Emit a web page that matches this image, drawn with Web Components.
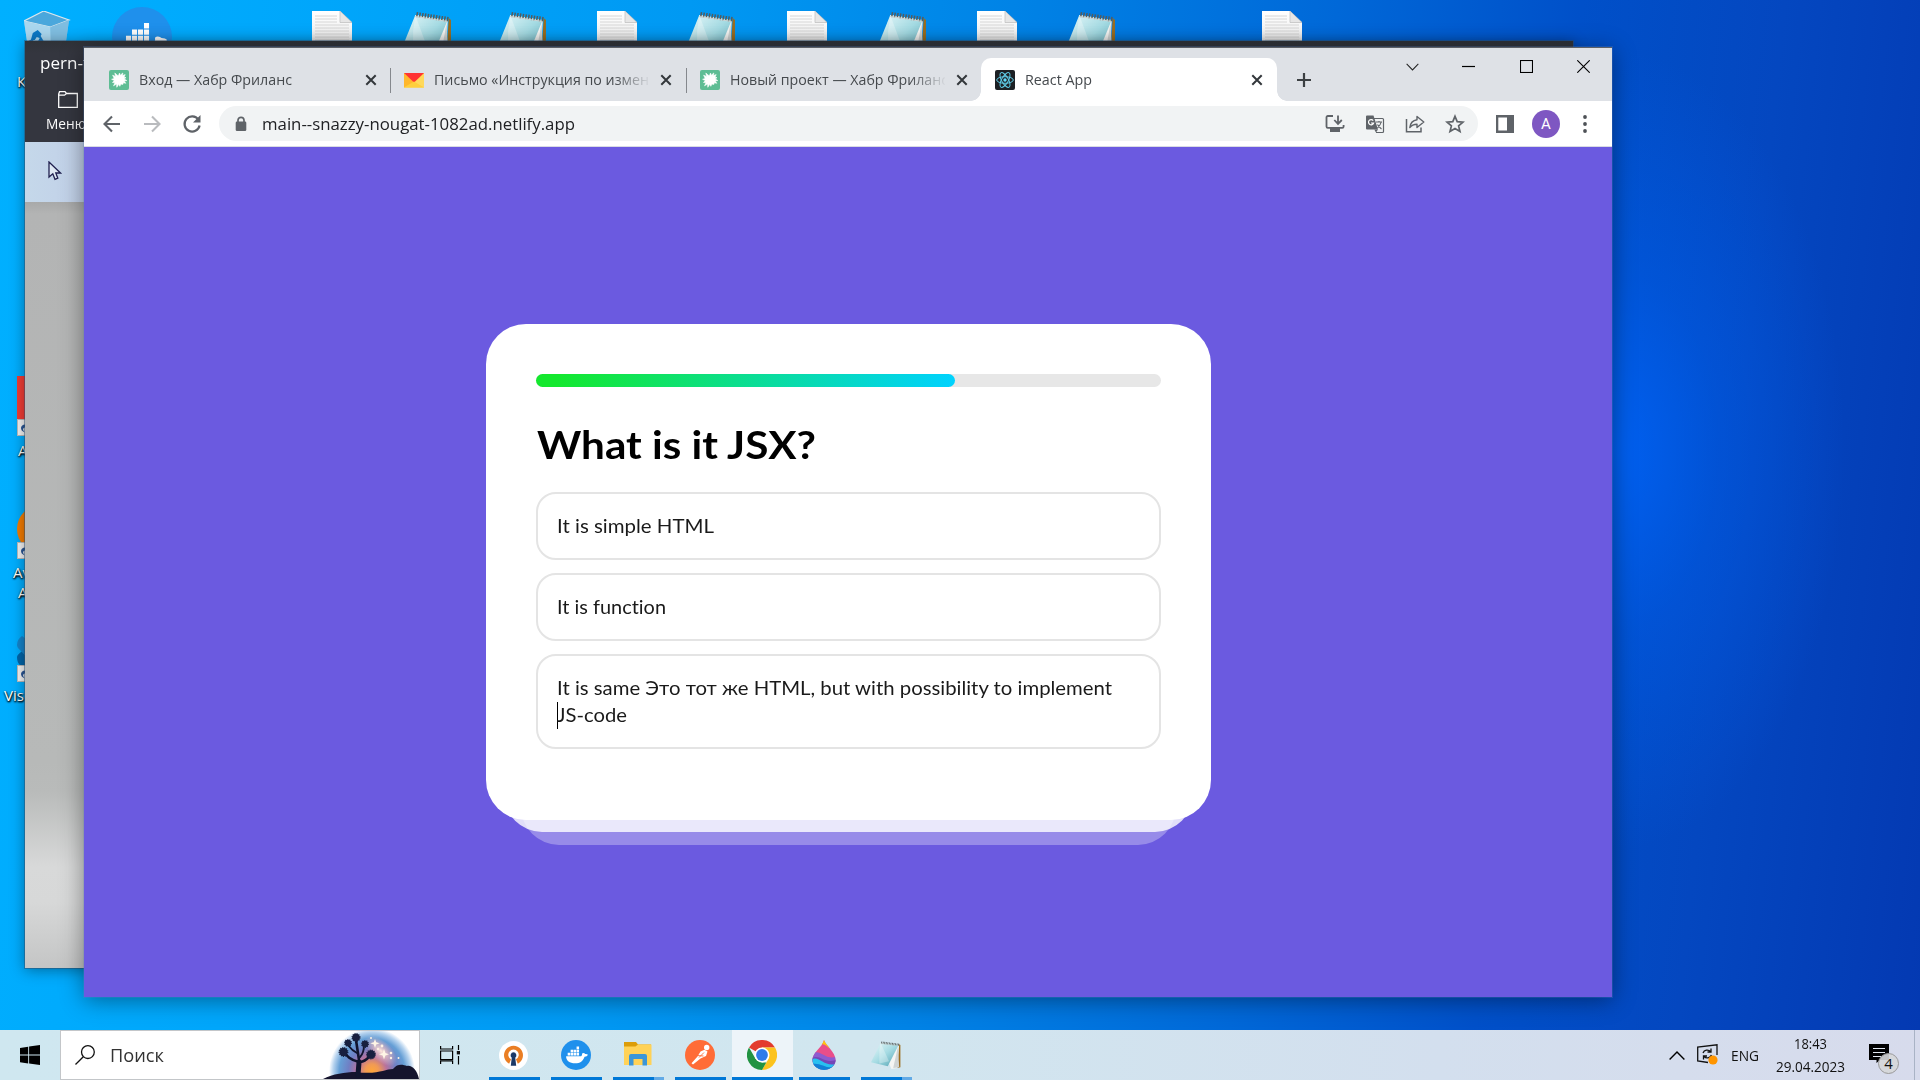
<!DOCTYPE html>
<html lang="ru">
<head>
<meta charset="utf-8">
<title>React App</title>
<style>
html,body{margin:0;height:100%;overflow:hidden;background:#08f}
body{font-family:"Open Sans","Noto Sans",sans-serif;width:1920px;height:1080px;font-variant-ligatures:none}
</style>
</head>
<body>
<desktop-shell></desktop-shell>
<script>
const define = (name, html, setup) => {
  const tpl = document.createElement('template');
  tpl.innerHTML = html;
  customElements.define(name, class extends HTMLElement {
    constructor(){ super(); this.attachShadow({mode:'open'}).appendChild(tpl.content.cloneNode(true)); }
    connectedCallback(){ if (setup) setup(this, this.shadowRoot); }
  });
};

const whale = '<path d="M4 17H22C24 17 24.8 15.600 24.300 13.700C25.800 12.300 27.600 13 28.500 14C30 14 31.500 14.600 32 15.200C31.200 17 29.500 17.600 27.600 17.500C25.800 23 22 26 15.500 26C8.500 26 4 23 4 17Z"/><path d="M6 12.500h3.200v3.600H6zm3.800 0H13v3.600H9.800zm3.800 0h3.200v3.600h-3.200zm3.800 0h3.200v3.600h-3.200zM9.800 8.500H13v3.400H9.800zm3.800 0h3.200v3.400h-3.200zm3.800 0h3.200v3.400h-3.200zm0-4h3.200v3.400h-3.200z"/>';
const pad = '<defs><linearGradient id="pg" x1="0" y1="0" x2="1" y2="1"><stop offset="0" stop-color="#eefafb"/><stop offset=".5" stop-color="#a5dbe3"/><stop offset="1" stop-color="#4b9dae"/></linearGradient></defs><path d="M47 7L49 9V58L44 60Z" fill="#9b6c1d"/><path d="M16 4L46 9 44 60 34 62Z" fill="#f5f5f3"/><path d="M45 12L47 58 37 60Z" fill="#d0d4d4"/><path d="M16 4L46 9 28 56 0 47Z" fill="url(#pg)"/><path d="M16 4L30 45 14 50V20Z" fill="#fff" opacity=".3"/><path d="M17 3.500L47 8.500" stroke="#555c5c" stroke-width="5" stroke-dasharray="1.400 1.200"/><path d="M16 5.500L46 10.500" stroke="#cfd6d6" stroke-width="1"/>';
const G = {
  dockerBig:['0 0 60 60','<circle cx="30" cy="30" r="30" fill="#1f90ec"/><g fill="#fff" transform="translate(4.500 9) scale(1.580)">'+whale+'</g>'],
  docker:['0 0 30 30','<circle cx="15" cy="15" r="15" fill="#1f90ec"/><g fill="#fff" transform="translate(2 3) scale(.78)">'+whale+'</g>'],
  notepad:['0 0 50 62', pad],
  doc:['0 0 40 50','<defs><linearGradient id="dg" x1="0" y1="0" x2="0" y2="1"><stop offset="0" stop-color="#fff"/><stop offset="1" stop-color="#e4e4e4"/></linearGradient></defs><path d="M0 0H28L40 11.500V50H0Z" fill="url(#dg)"/><path d="M28 0L40 11.500H28Z" fill="#e6e6e6" stroke="#bbb" stroke-width=".7"/><path d="M3 5H25M3 8H25M3 11H25M3 14H37M3 17H37M3 20H37M3 23H37M3 26H37M3 29H37M3 32H37" stroke="#d6d6d6" stroke-width="1"/>'],
  bin:['0 0 48 50','<path d="M0 10L20 0 46 9 40 50H6Z" fill="#8ecbee" opacity=".8"/><path d="M0 10L20 0 46 9 27 16Z" fill="#4aa7dc" stroke="#d9e6ec" stroke-width="1.200"/><path d="M0 10L27 16 28 50H6Z" fill="#a9d6ee"/><path d="M27 16L46 9 40 50H28Z" fill="#7fbde0"/><path d="M9 22l5-3 4 4-2 4-3-1-2 3H7zM3 31l5-3 3 3-2 6 4 3H6zM17 25l3 5-3 3-3-2z" fill="#0c77c4"/>'],
  back:['0 0 20 20','<path d="M18 10H3M10 2.500L2.500 10 10 17.500" fill="none" stroke="currentColor" stroke-width="2.100"/>'],
  fwd:['0 0 20 20','<path d="M2 10H17M10 2.500L17.500 10 10 17.500" fill="none" stroke="currentColor" stroke-width="2.100"/>'],
  reload:['0 0 20 20','<path d="M16.400 5.600A7.600 7.600 0 1 0 17.600 11.500" fill="none" stroke="currentColor" stroke-width="2.200"/><path d="M18.500 1V8.500H11Z" fill="currentColor"/>'],
  lock:['0 0 12 16','<path d="M3 7V4.300a3 3 0 0 1 6 0V7" fill="none" stroke="currentColor" stroke-width="1.700"/><rect x=".7" y="5.600" width="10.600" height="9.400" rx="1.300" fill="currentColor"/>'],
  close:['0 0 12 12','<path d="M1.300 1.300L10.700 10.700M10.700 1.300L1.300 10.700" stroke="currentColor" stroke-width="2"/>'],
  plus:['0 0 14 14','<path d="M7 0V14M0 7H14" stroke="currentColor" stroke-width="2.200"/>'],
  habr:['0 0 20 20','<rect width="20" height="20" rx="2" fill="#5ebd94"/><path d="M9.500 5.500L10.500 3 11.300 5.200 13.800 3 13.600 5.600 16.200 4.600 15 7.300 17 7.600 15.300 9 17.800 10.600 15.200 11 16.800 13.300 14.300 12.800 13.800 14.500 12 14 10.800 16.300 9.800 14.200 7.800 17.300 7.600 14 4.500 15.800 6 12.800 3.500 12.500 5.300 10.500 2.600 9.300 5.200 8.400 3.600 5.200 6.600 6.400 5.800 3 8.300 5.200Z" fill="#fff" stroke="#fff" stroke-width=".6" stroke-linejoin="round"/>'],
  mail:['0 0 20 20','<path d="M0 3H20V17.500H0Z" fill="#ffcc35"/><path d="M0 3L10 12.500 0 17.500Z" fill="#ffb72c"/><path d="M20 3L10 12.500 20 17.500Z" fill="#ffd95c"/><path d="M0 3H20L10 12.500Z" fill="#ff3333"/><path d="M0 17.500L10 11.500 20 17.500Z" fill="#ffcf3c"/>'],
  react:['0 0 20 20','<rect width="20" height="20" rx="2" fill="#1c2024"/><g fill="none" stroke="#5fcbe6" stroke-width="1"><ellipse cx="10" cy="10" rx="8.300" ry="3.300"/><ellipse cx="10" cy="10" rx="8.300" ry="3.300" transform="rotate(60 10 10)"/><ellipse cx="10" cy="10" rx="8.300" ry="3.300" transform="rotate(120 10 10)"/></g><circle cx="10" cy="10" r="1.700" fill="#61dafb"/>'],
  chev:['0 0 14 8','<path d="M.7 .8L7 7 13.300 .8" fill="none" stroke="#222" stroke-width="1.100"/>'],
  min:['0 0 13 13','<path d="M0 6.500H13" stroke="#000" stroke-width="1.200"/>'],
  max:['0 0 13 13','<rect x=".5" y=".5" width="12" height="12" fill="none" stroke="#000" stroke-width="1.100"/>'],
  wclose:['0 0 13 13','<path d="M.3 .3L12.700 12.700M12.700 .3L.3 12.700" stroke="#000" stroke-width="1.100"/>'],
  install:['0 0 20 20','<path d="M8 2H2.800A1.300 1.300 0 0 0 1.500 3.300V12.500A1.300 1.300 0 0 0 2.800 13.800H17.300A1.300 1.300 0 0 0 18.600 12.500V11" fill="none" stroke="currentColor" stroke-width="1.800"/><path d="M5 14H15V18H5Z" fill="currentColor"/><path d="M13 1.500V9M9.300 6L13 9.900 16.800 6" fill="none" stroke="currentColor" stroke-width="1.800"/>'],
  translate:['0 0 20 20','<path d="M9 4.500H17.500A1 1 0 0 1 18.500 5.500V17.500A1 1 0 0 1 17.500 18.500H11" fill="none" stroke="currentColor" stroke-width="1.200"/><path d="M2 1.500H8.500L13 15.500H2A1 1 0 0 1 1 14.500V2.500A1 1 0 0 1 2 1.500Z" fill="currentColor"/><path d="M9.300 15.500H13L11 18.500Z" fill="currentColor"/><path d="M8.200 6.600A2.600 2.600 0 1 0 8.600 9H6" fill="none" stroke="#fff" stroke-width="1.200"/><path d="M11 8H17M14 7V8.500M16 8.500C15.500 11 13.500 13 12.500 14M12.500 10.500C13.500 12.500 15 13.800 16.500 15" fill="none" stroke="currentColor" stroke-width="1.100"/>'],
  share:['0 0 20 20','<path d="M1.500 5V17.800H16V13.500" fill="none" stroke="currentColor" stroke-width="1.500"/><path d="M12 2.500L18.800 8 12 13.500V10.300C8.500 10.300 6.500 11.300 4.800 13.600 5.300 9.500 7.500 6.300 12 5.700Z" fill="none" stroke="currentColor" stroke-width="1.400" stroke-linejoin="round"/>'],
  star:['0 0 20 20','<path d="M10 2.300L12.200 7.600 18 8.100 13.600 11.900 15 17.500 10 14.500 5 17.500 6.400 11.900 2 8.100 7.800 7.600Z" fill="none" stroke="currentColor" stroke-width="1.700"/>'],
  panel:['0 0 18 18','<path d="M0 0H18V18H0ZM2.300 2.500V15.500H11V2.500Z" fill="currentColor" fill-rule="evenodd"/>'],
  dots:['0 0 4 18','<circle cx="2" cy="2" r="1.900"/><circle cx="2" cy="9" r="1.900"/><circle cx="2" cy="16" r="1.900"/>'],
  folder:['0 0 20 17','<path d="M.7 3V16.300H19.300V2.500H8.500L7 .7H1.500L.7 3ZM.7 4.200H6.500L8.500 2.500" fill="none" stroke="#fff" stroke-width="1.300"/>'],
  cursor:['0 0 14 20','<path d="M1 1V16L4.800 12.800 7 18.300 9.800 17.200 7.800 12H12.500Z" fill="#dfe9f4" stroke="#20204f" stroke-width="1.300"/>'],
  arrow:['0 0 17 17','<rect x=".5" y=".5" width="16" height="16" fill="#f4f4f4" stroke="#bbb"/><path d="M8 13.500C2 11.500 3.500 5.500 8 5.500V2.500L14 7 8 11V8.500C5.500 9 5.500 11 8 13.500Z" fill="#2b5797"/>'],
  vs:['0 0 48 30','<path d="M0 21C0 19 2 18 4 16L14 9 40 30H4C1 28 0 25 0 21Z" fill="#0065a9"/><path d="M0 9C0 5 2 2 5 0L26 16 12 24 3 14C1 12 0 11 0 9Z" fill="#1484cc"/>'],
  windows:['0 0 20 20','<path d="M0 2.900L8.200 1.700V9.600H0ZM9.100 1.500L20 0V9.500H9.100ZM0 10.500H8.200V18.400L0 17.200ZM9.100 10.500H20V20L9.100 18.500Z"/>'],
  search:['0 0 20 20','<circle cx="12.900" cy="7.100" r="6.400" fill="none" stroke="#111" stroke-width="1.300"/><path d="M8.300 11.700L.5 19.500" stroke="#111" stroke-width="1.300"/>'],
  task:['0 0 20 20','<path d="M.6 1V4H12.600V1M.6 19V16H12.600V19M.6 6H12.600V14.600H.6ZM18.500 0V5M18.500 11V19.500" fill="none" stroke="#000" stroke-width="1.200"/><rect x="16.800" y="6" width="3.200" height="3.400"/>'],
  vpn:['0 0 30 30','<circle cx="15" cy="15" r="15" fill="#fff"/><path d="M10.500 23.500A9.800 9.800 0 1 1 19.500 23.500L17.500 19A5.400 5.400 0 1 0 12.500 19Z" fill="#ea7e23"/><path d="M15 11.700A3.200 3.200 0 0 1 16.800 17.400L17.800 25.500H12.200L13.200 17.400A3.200 3.200 0 0 1 15 11.700Z" fill="#1b3967"/>'],
  explorer:['0 0 30 26','<path d="M1 0H13L15 2.500H28V8H1Z" fill="#dc9d09"/><path d="M1 4.500H12.500L15 2.500H28.500V23H1Z" fill="#ffd257"/><path d="M6 23.500V14A2 2 0 0 1 8 12H22A2 2 0 0 1 24 14V23.500H19.500V17H10.500V23.500Z" fill="#3b96d8"/>'],
  postman:['0 0 30 30','<circle cx="15" cy="15" r="15" fill="#ff6c37"/><circle cx="21.700" cy="7.500" r="2.700" fill="#fff"/><path d="M19.500 9.800L22.500 11.500 21 16 15.500 18.500 8 24.500 6.500 23.200 12.500 16.500 15.500 11.500Z" fill="#fff"/><path d="M14 17.500L19 12.500M12 15.500L18.500 16" stroke="#ff6c37" stroke-width=".9"/>'],
  chrome:['0 0 30 30','<path d="M15 15L2 7.500A15 15 0 0 1 28 7.500H15Z" fill="#e33b2e"/><path d="M15 7.500H28A15 15 0 0 1 15 30L21.500 18.800Z" fill="#fcc31e"/><path d="M2 7.500L8.500 18.800 15 22.500H19.300L15 30A15 15 0 0 1 2 7.500Z" fill="#229342"/><circle cx="15" cy="15" r="7.500" fill="#fff"/><circle cx="15" cy="15" r="5.900" fill="#2f7bea"/>'],
  paint:['0 0 24 30','<defs><clipPath id="dc"><path d="M12 0C14 6 23.500 12 23.500 20A11.500 10 0 0 1 .5 20C.5 12 10 8 12 0Z"/></clipPath></defs><g clip-path="url(#dc)"><path d="M0 0H24V30H0Z" fill="#e94e8a"/><path d="M8 5C11 3 15 6 17 8L24 0H8Z" fill="#ffc60a"/><path d="M0 14C8 8 12 20 24 17V24C12 24 9 14 0 20Z" fill="#8d5bd0"/><path d="M0 18C8 14 12 24 24 20V30H0Z" fill="#7447b7"/><path d="M0 19C8 16 12 27 24 24V30H0Z" fill="#28c0f0"/><path d="M0 24C8 22 14 29 22 27V30H0Z" fill="#1180d6"/></g>'],
  up:['0 0 16 9','<path d="M.6 8.400L8 1 15.400 8.400" fill="none" stroke="#000" stroke-width="1.400"/>'],
  sync:['0 0 22 22','<path d="M11 18.500L.7 17V3L20 .8V11" fill="none" stroke="#111" stroke-width="1.300"/><path d="M6 9A4.500 4.500 0 0 1 13.500 7.500M14 4.500V8H10.500M14.500 11A4.500 4.500 0 0 1 7 12.500M6.500 15.500V12H10" fill="none" stroke="#111" stroke-width="1.300"/><circle cx="16" cy="16" r="4.600" fill="#ff9500"/>'],
  notice:['0 0 20 19','<path d="M0 0H20V16H11L7.500 19V16H0Z"/><path d="M4 4.500H16M4 8.500H16M4 12.500H12" stroke="#e1e7f0" stroke-width="1.200"/>'],
  tree:['0 0 96 48','<defs><radialGradient id="skyGlow" gradientUnits="userSpaceOnUse" cx="49" cy="40" r="43"><stop offset="0" stop-color="#ffa63a"/><stop offset=".16" stop-color="#f09a55"/><stop offset=".34" stop-color="#b8729c"/><stop offset=".55" stop-color="#6f7fc4"/><stop offset=".76" stop-color="#669fd6"/><stop offset=".9" stop-color="#b5d2ee"/><stop offset="1" stop-color="#ffffff"/></radialGradient><radialGradient id="mist"><stop offset="0" stop-color="#ffe8dc"/><stop offset=".5" stop-color="#f0c4c4" stop-opacity=".6"/><stop offset="1" stop-color="#ecc0c6" stop-opacity="0"/></radialGradient></defs><circle cx="49" cy="40" r="43" fill="url(#skyGlow)"/><ellipse cx="58" cy="20" rx="20" ry="10" transform="rotate(42 58 20)" fill="url(#mist)"/><path d="M0 48C10 43 22 41 33 41C55 44 62 38 70 38C75 32 80 34 84 35C89 34 94 39 96 48Z" fill="#15142d"/><g fill="none" stroke="#11152e" stroke-linecap="round"><path d="M35 43L36 29 33 9M36 31C27 29 24 25 21 21M37 31C44 30 46 25 47 25" stroke-width="2.600"/><path d="M34 22C28 19 26 15 25 14M37 26C41 22 41 17 41 14" stroke-width="1.900"/><path d="M35 44L36 31" stroke-width="5"/></g><g fill="#18203f" stroke="#18203f" stroke-width="1.500" stroke-dasharray="1 1"><circle cx="33" cy="6.500" r="3.800"/><circle cx="25" cy="12" r="3.200"/><circle cx="42" cy="13" r="3.200"/><circle cx="20.500" cy="21" r="4.200"/><circle cx="48" cy="23.500" r="4.200"/></g><path d="M52 8l1.200 3.200 3.500 1.100-3.500 1.200L52 17l-1.200-3.500-3.500-1.200 3.500-1.100zM61 18l1.400 4 3.600 1.200-3.600 1.300L61 28.500l-1.300-4-3.700-1.300 3.700-1.200z" fill="#fff6e6"/><g fill="#fff2e4"><circle cx="55" cy="18" r="1.200"/><circle cx="59" cy="15" r="1.400"/><circle cx="68" cy="22" r="1.300"/><circle cx="68" cy="27" r="1.200"/><circle cx="75.500" cy="27" r="1"/><circle cx="48" cy="7" r="1"/></g>']
};

// <ui-icon name w h>
customElements.define('ui-icon', class extends HTMLElement {
  constructor(){ super(); this.attachShadow({mode:'open'}); }
  connectedCallback(){
    const [vb, body] = G[this.getAttribute('name')];
    const w = this.getAttribute('w'), h = this.getAttribute('h') || w;
    this.shadowRoot.innerHTML = `<style>:host{display:block;flex:none;width:${w}px;height:${h}px}svg{display:block}</style><svg width="${w}" height="${h}" viewBox="${vb}" preserveAspectRatio="none" fill="currentColor">${body}</svg>`;
  }
});

// Text condensed or widened to an exact advance width
define('fit-text', `<style>:host{display:block;flex:none;white-space:nowrap}span{display:inline-block;transform-origin:0 50%}</style><span><slot></slot></span>`,
  (el, root) => {
    const s = root.querySelector('span'), w = +el.getAttribute('w');
    const n = s.offsetWidth;
    el.style.width = w + 'px';
    if (n) s.style.transform = `scaleX(${w / s.getBoundingClientRect().width})`;
  });

define('browser-tab', `<style>
:host{display:flex;align-items:center;box-sizing:border-box;width:295.400px;height:43px;padding:0 13px 0 14px;position:relative;color:#45494d;font-size:14.5px}
:host([active]){background:#fff;border-radius:10px 10px 0 0;width:296px}
:host([active])::before,:host([active])::after{content:"";position:absolute;bottom:0;width:10px;height:10px}
:host([active])::before{left:-10px;background:radial-gradient(circle at 0 0,transparent 9.500px,#fff 10px)}
:host([active])::after{right:-10px;background:radial-gradient(circle at 100% 0,transparent 9.500px,#fff 10px)}
:host([sep])::after{content:"";position:absolute;right:-1px;top:10px;height:25px;width:1px;background:#85888d}
.t{width:215px;margin:-1px 11px 0 10px;overflow:hidden}
:host([fade]) .t{-webkit-mask-image:linear-gradient(90deg,#000 180px,transparent 217px)}
ui-icon[name=close]{color:#33373b}
</style><slot name="icon"></slot><div class="t"><slot></slot></div><ui-icon name="close" w="12"></ui-icon>`);

define('tab-strip', `<style>
:host{display:flex;height:53px;background:#dee1e6;box-sizing:border-box;padding:10px 0 0 11px;align-items:flex-start}
.plus{margin:15px 0 0 20px;color:#3c4043}
.ctl{display:flex;align-items:center;margin:0 0 0 auto;padding-right:22px;height:17px}
</style>
<browser-tab sep><ui-icon slot="icon" name="habr" w="20"></ui-icon><fit-text w="153">Вход — Хабр Фриланс</fit-text></browser-tab>
<browser-tab sep fade><ui-icon slot="icon" name="mail" w="20"></ui-icon><fit-text w="215">Письмо «Инструкция по измен</fit-text></browser-tab>
<browser-tab fade><ui-icon slot="icon" name="habr" w="20"></ui-icon><fit-text w="218">Новый проект — Хабр Фриланс</fit-text></browser-tab>
<browser-tab active><ui-icon slot="icon" name="react" w="20"></ui-icon><fit-text w="67">React App</fit-text></browser-tab>
<ui-icon class="plus" name="plus" w="14"></ui-icon>
<div class="ctl"><ui-icon name="chev" w="13" h="8"></ui-icon><ui-icon name="min" w="13" style="margin-left:43px"></ui-icon><ui-icon name="max" w="13" style="margin-left:45px"></ui-icon><ui-icon name="wclose" w="13" style="margin-left:44px"></ui-icon></div>`);

define('tool-bar', `<style>
:host{display:flex;height:46px;box-sizing:border-box;background:#fff;border-bottom:1px solid #d9dbe4;align-items:center;color:#5f6368;padding:0 25px 0 18px}
.nav{display:flex;gap:20px}
.omni{display:flex;align-items:center;width:1259px;height:35px;box-sizing:border-box;border-radius:18px;background:#f1f3f4;margin-left:17px;padding:0 13px 0 16px}
.url{color:#202124;font-size:17px;margin-left:15px}
.acts{margin-left:auto;display:flex;gap:20px}
.av{width:28px;height:28px;border-radius:50%;background:#7e57c2;color:#fff;font:15px/28px Roboto,sans-serif;text-align:center;margin:0 23px 0 18px}
</style>
<div class="nav"><ui-icon name="back" w="20"></ui-icon><ui-icon name="fwd" w="20" style="color:#b9bbbe"></ui-icon><ui-icon name="reload" w="20"></ui-icon></div>
<div class="omni"><ui-icon name="lock" w="12" h="16"></ui-icon><fit-text class="url" w="313">main--snazzy-nougat-1082ad.netlify.app</fit-text>
<div class="acts"><ui-icon name="install" w="20"></ui-icon><ui-icon name="translate" w="20"></ui-icon><ui-icon name="share" w="20"></ui-icon><ui-icon name="star" w="20"></ui-icon></div></div>
<ui-icon name="panel" w="18" style="margin-left:18px"></ui-icon><div class="av">A</div><ui-icon name="dots" w="4" h="18" style="color:#4d5156"></ui-icon>`);

define('answer-option', `<style>
:host{display:block;box-sizing:border-box;border:2px solid #e4e4e4;border-radius:20px;padding:17.700px 19px 19.700px;font-size:19.500px;line-height:27px;color:#1a1a1a}
</style><slot></slot>`);

define('quiz-progress', `<style>
:host{display:block;height:13px;border-radius:7px;background:#e7e7e7}
div{width:67.100%;height:100%;border-radius:7px;background:linear-gradient(98deg,#14e82e 5%,#00d2ff 100%)}
</style><div></div>`);

define('quiz-card', `<style>
:host{display:block;position:relative;width:725px;height:496px;font-family:Lato,"Open Sans",sans-serif;color:#000}
.s{position:absolute;border-radius:38px;height:80px}
.s1{left:18px;right:18px;bottom:-12px;background:rgba(255,255,255,.8)}
.s2{left:35px;right:35px;bottom:-25px;background:rgba(255,255,255,.3)}
.c{position:relative;box-sizing:border-box;height:100%;background:#fff;border-radius:40px;padding:50px;display:flex;flex-direction:column}
h1{margin:33px 0 0 1px;font-size:39px;line-height:48px;font-weight:700}
.list{display:flex;flex-direction:column;gap:12.600px;margin-top:24px}
.caret{position:relative}
.caret::before{content:"";position:absolute;left:0;top:1px;width:1px;height:27px;background:#000}
</style>
<div class="s s2"></div><div class="s s1"></div>
<div class="c"><quiz-progress></quiz-progress>
<h1><fit-text w="279">What is it JSX?</fit-text></h1>
<div class="list">
<answer-option><fit-text w="157">It is simple HTML</fit-text></answer-option>
<answer-option><fit-text w="109">It is function</fit-text></answer-option>
<answer-option><fit-text w="555">It is same Это тот же HTML, but with possibility to implement</fit-text><div class="caret"><fit-text w="70">JS-code</fit-text></div></answer-option>
</div></div>`);

define('browser-window', `<style>
:host{display:flex;flex-direction:column;box-sizing:border-box;width:1528px;height:950px;background:#6b5ae0;border-top:1px solid #5d6066;box-shadow:0 0 0 1px rgba(90,130,190,.25),0 3px 22px rgba(0,0,0,.42)}
main{flex:1;display:flex;justify-content:center;align-items:flex-start;padding-top:177px}
</style><tab-strip></tab-strip><tool-bar></tool-bar><main><quiz-card></quiz-card></main>`);

define('editor-window', `<style>
:host{display:flex;flex-direction:column;width:1548px;height:927px;color:#fff;box-shadow:0 0 0 1px rgba(50,80,110,.5),0 2px 14px rgba(0,0,0,.4)}
header{height:101px;background:linear-gradient(#2f3238,#34363f 12px);box-sizing:border-box;padding:9px 15px}
.t{font-size:17px;line-height:26px}
.m{display:flex;flex-direction:column;align-items:flex-start;margin:15px 0 0 6px;font-size:15px;line-height:20px;gap:5px}
.m ui-icon{margin-left:12px}
.b{height:60px;background:linear-gradient(90deg,#c5d8ea,#c1d0e8 60px);box-sizing:border-box;padding:19px 23px}
.p{flex:1;background:linear-gradient(#a8a9a9,#b3b4b4 12px,#b7b9b8 560px,#b9bbba 590px,#d8d9d9 665px,#d7d8d8 700px,#c4c5c5 766px)}
</style><header><fit-text class="t" w="49">pern-t</fit-text><div class="m"><ui-icon name="folder" w="20" h="17"></ui-icon><fit-text w="40">Меню</fit-text></div></header><div class="b"><ui-icon name="cursor" w="14" h="20"></ui-icon></div><div class="p"></div>`);

define('task-item', `<style>
:host{display:flex;flex-direction:column;align-items:center;width:51px;height:50px;box-sizing:border-box;position:relative;flex:none}
.i{flex:1;display:flex;align-items:center;padding:3px 2px 0 0}
.u{width:100%;height:3px;background:#0078d7;flex:none}
:host([wide]){width:61px;background:#edf4f9}
:host([multi]) .u{background:linear-gradient(90deg,#0078d7 41px,#62aae6 41px)}
</style><div class="i"><slot></slot></div><div class="u"></div>`);

define('task-bar', `<style>
:host{display:flex;align-items:stretch;width:1920px;height:50px;background:linear-gradient(90deg,#cfe7f0,#d1e6ef 45%,#d3dfee 75%,#d7dbec);color:#111}
.start{width:60px;display:flex;align-items:center;justify-content:center}
.search{width:360px;box-sizing:border-box;border:1px solid #c3c6c9;background:#fff;display:flex;align-items:center;padding-left:14px;color:#333;font-size:18.500px}
.search .l{margin:-2px 0 0 15px}
.search ui-icon[name=tree]{margin-left:auto}
.tv{width:60px;display:flex;align-items:center;justify-content:center}
.apps{display:flex;margin-left:9px}
.tray{margin-left:auto;display:flex;align-items:center}
.clock{display:flex;flex-direction:column;align-items:center;font-size:15px;line-height:23px;margin-left:17px;width:69px}
.n{position:relative;margin:-3px 0 0 24px}
.badge{position:absolute;left:9px;top:9px;width:19px;height:19px;border:1px solid #999;border-radius:50%;background:rgba(214,215,217,.9);font:500 15px/19px "Open Sans";text-align:center}
.end{width:5px;height:50px;border-left:1px solid #a9b3c5;margin-left:25px}
</style>
<div class="start"><ui-icon name="windows" w="20" style="color:#000"></ui-icon></div>
<div class="search"><ui-icon name="search" w="20"></ui-icon><fit-text class="l" w="54">Поиск</fit-text><ui-icon name="tree" w="96" h="48"></ui-icon></div>
<div class="tv"><ui-icon name="task" w="20"></ui-icon></div>
<div class="apps">
<task-item><ui-icon name="vpn" w="29"></ui-icon></task-item>
<task-item style="margin-left:11px"><ui-icon name="docker" w="30"></ui-icon></task-item>
<task-item multi style="margin-left:11px"><ui-icon name="explorer" w="30" h="26"></ui-icon></task-item>
<task-item style="margin-left:11px"><ui-icon name="postman" w="30"></ui-icon></task-item>
<task-item wide style="margin-left:6px"><ui-icon name="chrome" w="30"></ui-icon></task-item>
<task-item style="margin-left:6px"><ui-icon name="paint" w="24" h="30"></ui-icon></task-item>
<task-item multi style="margin-left:11px"><ui-icon name="notepad" w="30" h="28"></ui-icon></task-item>
</div>
<div class="tray"><ui-icon name="up" w="16" h="9"></ui-icon><ui-icon name="sync" w="22" style="margin-left:12px"></ui-icon><fit-text w="28" style="margin-left:12px;font-size:15px">ENG</fit-text>
<div class="clock"><fit-text w="33">18:43</fit-text><fit-text w="69">29.04.2023</fit-text></div>
<div class="n"><ui-icon name="notice" w="20" h="19" style="color:#000"></ui-icon><div class="badge">4</div></div><div class="end"></div></div>`);

const files = [['doc',312],['notepad',398],['notepad',493],['doc',597],['notepad',682],['doc',787],['notepad',873],['doc',977],['notepad',1062],['doc',1262]];
define('desktop-shell', `<style>
:host{display:flex;flex-direction:column;width:1920px;height:1080px;overflow:hidden}
.desk{flex:1;position:relative;overflow:hidden;background:
 radial-gradient(ellipse 230px 400px at 1615px 450px,rgba(0,98,245,.9),rgba(0,92,232,.5) 45%,transparent),
 linear-gradient(96deg,#00b0ff 0,#00a6fb 16%,#0099f3 34%,#0083e6 50%,#0068d8 66%,#0050c9 78%,#0447c0 88%,#0439b2 100%)}
.desk>*{position:absolute}
.lbl{color:#fff;font-size:15px;line-height:20px;text-shadow:1px 1px 2px #000,0 1px 2px #000}
</style>
<div class="desk">
<ui-icon name="bin" w="47" h="50" style="left:24px;top:11px"></ui-icon>
<ui-icon name="dockerBig" w="60" style="left:112px;top:7px"></ui-icon>
${files.map(([n,x]) => `<ui-icon name="${n}" w="${n==='doc'?40:54}" h="${n==='doc'?50:62}" style="left:${x}px;top:11px"></ui-icon>`).join('')}
<div class="lbl" style="left:17px;top:71px">К</div>
<div style="left:17px;top:376px;width:48px;height:48px;background:#f23c34"></div><ui-icon name="arrow" w="17" style="left:17px;top:419px"></ui-icon><div class="lbl" style="left:18px;top:440px">A</div>
<div style="left:17px;top:505px;width:48px;height:48px;border-radius:50%;background:#f57c00"></div><ui-icon name="arrow" w="17" style="left:17px;top:542px"></ui-icon><div class="lbl" style="left:13px;top:562px">Av</div><div class="lbl" style="left:18px;top:582px">A</div>
<ui-icon name="vs" w="48" h="30" style="left:17px;top:636px"></ui-icon><ui-icon name="arrow" w="17" style="left:17px;top:665px"></ui-icon><div class="lbl" style="left:4px;top:685px">Vis</div>
<editor-window style="left:25px;top:41px"></editor-window>
<browser-window style="left:84px;top:47px"></browser-window>
</div><task-bar></task-bar>`);
</script>
</body>
</html>
